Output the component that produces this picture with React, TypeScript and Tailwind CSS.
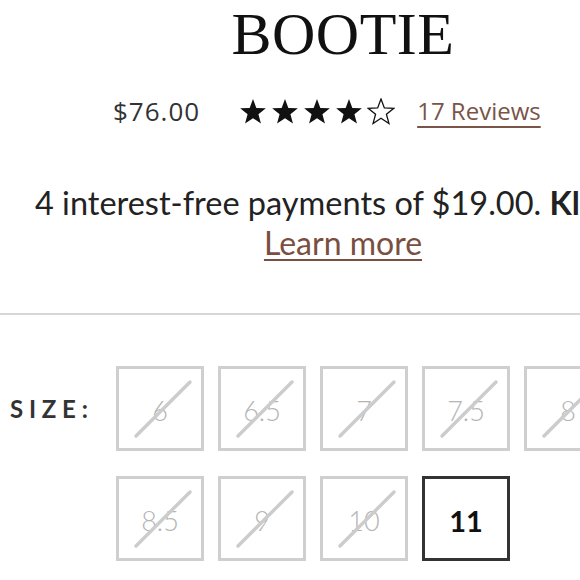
import React from "react";

const STAR = "13,0 16.35,8.89 25.84,9.33 18.42,15.26 20.94,24.42 13,19.2 5.06,24.42 7.58,15.26 0.16,9.33 9.65,8.89";

function Star({ filled }: { filled: boolean }) {
  return (
    <svg width="28" height="27" viewBox="-1 -1 28 27" className="block">
      <polygon
        points={STAR}
        fill={filled ? "#111" : "none"}
        stroke="#111"
        strokeWidth={filled ? 0 : 1.3}
        strokeLinejoin="miter"
      />
    </svg>
  );
}

const sizes = ["6", "6.5", "7", "7.5", "8", "8.5", "9", "10", "11"];
const available = ["11"];

function SizeBox({ size }: { size: string }) {
  const ok = available.includes(size);
  return (
    <div
      className={
        ok
          ? "relative w-[88px] h-[85px] border-[3px] border-[#333] flex items-center justify-center text-[29px] font-bold text-[#111]"
          : "relative w-[88px] h-[85px] border-[3px] border-[#cfcfcf] flex items-center justify-center text-[27px] font-light text-[#b4b4b4]"
      }
    >
      <span className="leading-none pt-[4px]">{size}</span>
      {!ok && (
        <svg className="absolute inset-0" width="82" height="79" viewBox="0 0 82 79">
          <line x1="17" y1="67" x2="71" y2="13" stroke="#cccccc" strokeWidth="3.4" strokeLinecap="round" />
        </svg>
      )}
    </div>
  );
}

export default function App() {
  return (
    <div className="w-[580px] h-[580px] overflow-hidden bg-white">
      <div className="w-[686px] flex flex-col" style={{ fontFamily: "Lato, 'Open Sans', sans-serif" }}>
        <h1
          className="mt-[4px] h-[60px] text-center text-[60px] leading-[60px] text-[#111] tracking-[0.5px]"
          style={{ fontFamily: "'Liberation Serif', 'DejaVu Serif', serif" }}
        >
          BOOTIE
        </h1>

        <div
          className="mt-[27px] h-[40px] ml-[113px] flex items-center"
          style={{ fontFamily: "'Open Sans', sans-serif" }}
        >
          <span className="text-[26px] leading-[40px] text-[#333] tracking-[1px]">$76.00</span>
          <div className="ml-[39px] flex gap-[4px]">
            {[1, 2, 3, 4, 5].map((s) => (
              <Star key={s} filled={s <= 4} />
            ))}
          </div>
          <a className="ml-[22px] text-[24px] leading-[40px] text-[#7a5446] underline decoration-2 underline-offset-[6px]">
            17 Reviews
          </a>
        </div>

        <p className="mt-[52px] text-center text-[32.5px] leading-[40px] text-[#222] whitespace-nowrap">
          4 interest-free payments of $19.00. <b className="font-bold">Klarna.</b>
        </p>
        <p className="text-center text-[32px] leading-[40px]">
          <a className="text-[#7a4f40] underline decoration-[1.5px] underline-offset-[4px]">Learn more</a>
        </p>

        <div className="mt-[50px] h-[2px] bg-[#d6d6d6]" />

        <div className="mt-[51px] flex">
          <div className="w-[116px] h-[85px] pl-[10px] flex items-center">
            <span className="text-[24px] font-bold tracking-[0.24em] text-[#333]">SIZE:</span>
          </div>
          <div className="w-[540px] flex flex-wrap gap-x-[14px] gap-y-[25px]">
            {sizes.map((s) => (
              <SizeBox key={s} size={s} />
            ))}
          </div>
        </div>
      </div>
    </div>
  );
}
